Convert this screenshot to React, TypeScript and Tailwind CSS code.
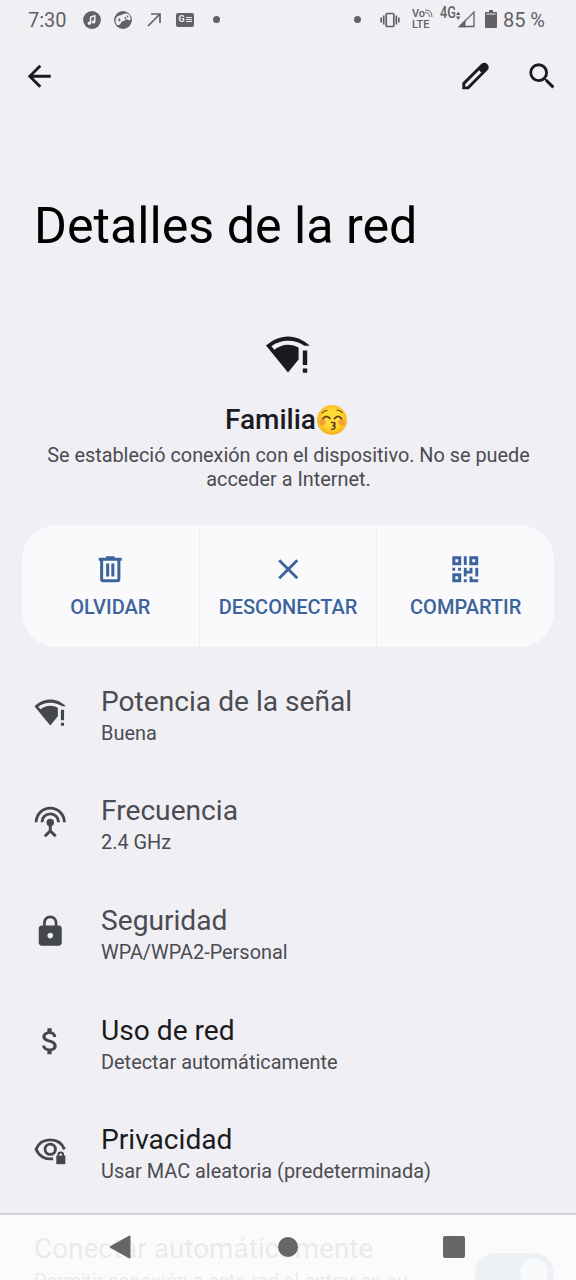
import type { ReactNode } from "react";
import { MdArrowBack, MdAttachMoney, MdClose, MdLock, MdSearch } from "react-icons/md";

function WifiAlertIcon({ className }: { className?: string }) {
  return (
    <svg viewBox="0 0 24 24" fill="currentColor" className={className}>
      <path d="M12 21.2 1 7.8C4 5 8 3.2 12 3.2S20 5 22.9 7.9H20.2C17.8 6.3 15 5.4 12 5.4S6 6.4 3.7 8.1L5.2 9.9C7 8.4 9.4 7.4 12 7.4c2 0 3.8.6 5.3 1.4v6Z" />
      <path d="M19.4 10.2h2.2v7.3h-2.2zM19.4 19.3h2.2v2.1h-2.2z" />
    </svg>
  );
}

function PencilIcon({ className }: { className?: string }) {
  return (
    <svg viewBox="0 0 24 24" fill="currentColor" className={className}>
      <path
        fillRule="evenodd"
        d="M3 21v-4.500L16.500 3.200q2.200-1.400 3.900.4t.4 3.900L7.500 21ZM5 19.100h1.500l9.700-9.700-1.500-1.500L5 17.600Z"
      />
    </svg>
  );
}

function AntennaIcon({ className }: { className?: string }) {
  return (
    <svg viewBox="0 0 24 24" fill="none" stroke="currentColor" strokeWidth="2" className={className}>
      <path d="M2.2 12a9.8 9.8 0 0 1 19.6 0M6.2 12a5.8 5.8 0 0 1 11.6 0" />
      <path d="M12 13v5M8.2 21.8 12 18l3.8 3.8" />
      <circle cx="12" cy="12.2" r="2.6" fill="currentColor" stroke="none" />
    </svg>
  );
}

function PrivacyIcon({ className }: { className?: string }) {
  return (
    <svg viewBox="0 0 24 24" fill="none" stroke="currentColor" strokeWidth="2" className={className}>
      <path d="M14 17.9c-5.4.8-10-2-11.9-6.6C3.8 7.300 7.500 4.800 12 4.800s8.300 2.500 9.900 6.600" />
      <circle cx="12" cy="11.300" r="3.600" />
      <path d="M16.200 15.700h6.300v6h-6.300z" fill="currentColor" stroke="none" />
      <path d="M17.600 16.500v-1.200a1.700 1.700 0 0 1 3.400 0v1.200" strokeWidth="1.300" />
    </svg>
  );
}

function TrashIcon({ className }: { className?: string }) {
  return (
    <svg viewBox="0 0 24 24" fill="none" stroke="currentColor" strokeWidth="2.100" className={className}>
      <path d="M6 5v14q0 1 1 1h10q1 0 1-1V5M4 5h16M9 4h6M10.200 8v9M13.800 8v9" />
    </svg>
  );
}

function QrIcon({ className }: { className?: string }) {
  return (
    <svg viewBox="0 0 24 24" fill="currentColor" className={className}>
      <path
        fillRule="evenodd"
        d="M3 3h6.200v6.200H3zM5.100 5.100v2h2v-2zM14.800 3H21v6.200h-6.200zM16.900 5.100v2h2v-2zM3 14.800h6.200V21H3zM5.100 16.900v2h2v-2z"
      />
      <path d="M11 3h2v6h-2zM3 11h2v2H3zM7 11h2v2H7zM11 11h2v2h2v-2h2v4h-4v2h-2zM19 11h2v6h-2zM11 19h2v2h-2zM15 17h2v2h4v2h-6z" />
    </svg>
  );
}

function KissEmoji() {
  return (
    <svg viewBox="0 0 32 32" className="h-[32px] w-[32px]">
      <defs>
        <radialGradient id="face" cx="50%" cy="45%" r="52%">
          <stop offset="0.500" stopColor="#ffdc35" />
          <stop offset="1" stopColor="#f8b51b" />
        </radialGradient>
      </defs>
      <circle cx="16" cy="16" r="15" fill="url(#face)" />
      <circle cx="6.500" cy="18" r="3.200" fill="#f58a45" opacity="0.700" />
      <circle cx="25.500" cy="18" r="3.200" fill="#f58a45" opacity="0.700" />
      <g fill="none" stroke="#5b3b22" strokeLinecap="round">
        <path d="M7 14.500q3.500-4.400 7 0M18.500 14.500q3.500-4.400 7 0" strokeWidth="1.800" />
        <path d="M6 9q2-2.500 5-2.500M21 6q3 0 5 2.500" strokeWidth="1.200" />
        <path d="M15.500 18.500q4-.3 3.500 1.700-.3 1.200-2.500 1.500 3 .3 2.500 2-.5 1.500-3.300 1.500" strokeWidth="1.600" />
      </g>
    </svg>
  );
}

function StatusBar() {
  return (
    <header className="flex h-[39px] items-center pl-7 pr-[31px] text-[20px] leading-none text-[#626166]">
      <span className="w-[39px]">7:30</span>
      <svg viewBox="0 0 18 18" className="ml-4 h-[18px] w-[18px]">
        <circle cx="9" cy="9" r="8.900" fill="currentColor" />
        <path d="M7.600 12V6l4.200-1.200v6" fill="none" stroke="#f0eff4" strokeWidth="1.500" />
        <circle cx="6.400" cy="12.200" r="1.700" fill="#f0eff4" />
        <circle cx="10.600" cy="10.900" r="1.700" fill="#f0eff4" />
      </svg>
      <svg viewBox="0 0 18 18" className="ml-[13px] h-[18px] w-[18px]">
        <circle cx="9" cy="9" r="8.900" fill="currentColor" />
        <path
          d="M1.500 8.500Q2.500 5 5.500 4.500q2-.3 4-1.500 3.500-1.300 5.500.5 2 2.500 1.500 5.500-1.500.8-3-.5-1.500-.8-3 1-1.500.8-3 1.300-1.500 4-4 3.500Q1 12 1.500 8.500Z"
          fill="#f0eff4"
        />
        <path d="M3.800 8.800h3M5.300 7.300v3" stroke="currentColor" strokeWidth="1" />
        <circle cx="11.300" cy="7" r="0.900" fill="currentColor" />
        <circle cx="13.500" cy="5.500" r="0.900" fill="currentColor" />
      </svg>
      <svg viewBox="0 0 14 14" fill="none" stroke="currentColor" strokeWidth="1.700" className="ml-[15px] h-[14px] w-[14px]">
        <path d="M1 13 13 1M4 1h9v9" />
      </svg>
      <span className="ml-[15px] flex h-[14px] w-[18px] items-center justify-center gap-px rounded-[2px] bg-[#626166] text-[#f0eff4]">
        <span className="text-[9px] font-bold leading-none">G</span>
        <span className="flex flex-col gap-px">
          <span className="h-px w-[6px] bg-[#f0eff4]" />
          <span className="h-px w-[6px] bg-[#f0eff4]" />
          <span className="h-px w-[6px] bg-[#f0eff4]" />
        </span>
      </span>
      <span className="ml-[19px] h-[7px] w-[7px] rounded-full bg-[#626166]" />

      <span className="ml-auto h-[7px] w-[7px] rounded-full bg-[#626166]" />
      <svg viewBox="0 0 20 16" fill="none" stroke="currentColor" strokeWidth="1.700" className="ml-[19px] h-4 w-5">
        <rect x="6.200" y="1.500" width="7.600" height="13" rx="1" />
        <path d="M3.700 3.500v9M16.300 3.500v9M1.200 5.500v5M18.800 5.500v5" />
      </svg>
      <span className="mb-[2px] ml-3 flex w-[22px] flex-col text-[11px] font-medium leading-[11px]">
        <span className="flex items-center">
          Vo
          <svg viewBox="0 0 8 8" fill="none" stroke="currentColor" strokeWidth="0.900" className="h-2 w-2">
            <path d="M0 1q7 0 7 7M0 3.500Q4.500 3.500 4.500 8" />
          </svg>
        </span>
        <span>LTE</span>
      </span>
      <span className="mb-[13px] ml-[6px] w-[17px] text-[16px] font-medium leading-none">
        <span className="inline-block origin-left scale-x-[0.790]">4G</span>
      </span>
      <svg viewBox="0 0 20 18" className="-ml-px mb-[2px] h-[18px] w-5">
        <path d="M0 5 2.200 1.500l2.200 3.500zM0 6.500h4.400L2.200 10z" fill="currentColor" />
        <path d="M18 2v14.500H3.500Z" fill="none" stroke="currentColor" strokeWidth="1.300" />
        <path d="M2 17.200 9.500 9.500v7.700Z" fill="currentColor" />
      </svg>
      <svg viewBox="0 0 12 18" fill="currentColor" className="mb-[2px] ml-[9px] h-[18px] w-3">
        <path d="M4 0h4v2h3q1 0 1 1v14q0 1-1 1H1q-1 0-1-1V3q0-1 1-1h3Z" />
        <path d="M1.500 3.500h9v1h-9z" fill="#f0eff4" />
      </svg>
      <span className="ml-[6px] whitespace-nowrap">85 %</span>
    </header>
  );
}

function ActionButton({ icon, label }: { icon: ReactNode; label: string }) {
  return (
    <button
      type="button"
      className="flex flex-1 flex-col items-center bg-[#fafafd] pt-[27px] text-[20px] font-medium leading-6 text-[#3b639c]"
    >
      {icon}
      <span className="mt-2">{label}</span>
    </button>
  );
}

type RowProps = {
  icon?: ReactNode;
  title: string;
  summary: string;
  active?: boolean;
};

function DetailRow({ icon, title, summary, active }: RowProps) {
  return (
    <li className="flex h-[109.600px] items-center pl-[33px]">
      <span className="flex w-[68px] pb-[7px] text-[#44474c]">{icon}</span>
      <div className="pt-px">
        <p className={active ? "text-[28.150px] leading-[34px] text-[#1b1b1f]" : "text-[28.150px] leading-[34px] text-[#4b4c51]"}>
          {title}
        </p>
        <p className="mt-px text-[19.920px] leading-7 text-[#4b4c51]">{summary}</p>
      </div>
    </li>
  );
}

const ROW_ICON = "h-[34.500px] w-[34.500px]";

export default function App() {
  return (
    <div className="relative h-[1280px] w-[576px] overflow-hidden bg-[#f0eff4] font-[Roboto,sans-serif] text-[#1b1b1f]">
      <StatusBar />
      <nav className="flex h-[75px] items-center pl-[22px] pr-[17px]">
        <MdArrowBack className="h-[34.500px] w-[34.500px]" />
        <PencilIcon className="ml-auto h-[34.500px] w-[34.500px]" />
        <MdSearch className="ml-8 h-[34.500px] w-[34.500px]" />
      </nav>
      <h1 className="mt-[82px] pl-[34px] text-[50.200px] leading-[60px] text-black">Detalles de la red</h1>

      <section className="flex flex-col items-center pt-[74px] text-center">
        <WifiAlertIcon className="h-12 w-12" />
        <div className="mt-[26px] flex h-8 items-center pr-[3px] text-[28px] font-medium">
          Familia
          <KissEmoji />
        </div>
        <p className="mt-2 w-[500px] pl-px text-[19.850px] leading-[23.500px] text-[#4b4c51]">
          Se estableció conexión con el dispositivo. No se puede acceder a Internet.
        </p>
      </section>

      <div className="mx-[22px] mt-[34px] flex h-[122px] gap-px overflow-hidden rounded-[35px]">
        <ActionButton icon={<TrashIcon className="h-[34.500px] w-[34.500px]" />} label="OLVIDAR" />
        <ActionButton icon={<MdClose className="h-[34.500px] w-[34.500px]" />} label="DESCONECTAR" />
        <ActionButton icon={<QrIcon className="h-[34.500px] w-[34.500px]" />} label="COMPARTIR" />
      </div>

      <ul className="mt-[14px]">
        <DetailRow icon={<WifiAlertIcon className={ROW_ICON} />} title="Potencia de la señal" summary="Buena" />
        <DetailRow icon={<AntennaIcon className={ROW_ICON} />} title="Frecuencia" summary="2.4 GHz" />
        <DetailRow icon={<MdLock className={ROW_ICON} />} title="Seguridad" summary="WPA/WPA2-Personal" />
        <DetailRow icon={<MdAttachMoney className={ROW_ICON} />} title="Uso de red" summary="Detectar automáticamente" active />
        <DetailRow
          icon={<PrivacyIcon className={ROW_ICON} />}
          title="Privacidad"
          summary="Usar MAC aleatoria (predeterminada)"
          active
        />
        <li className="flex h-[110px] justify-between pl-[34px] pr-[22px] pt-[23px] text-[#1b1b1f]">
          <div>
            <p className="text-[27.950px] leading-[34px]">Conectar automáticamente</p>
            <p className="mt-[2px] text-[19.700px] leading-7">Permitir conexión a esta red al entrar en su</p>
          </div>
          <span className="mt-[21px] flex h-10 w-[79px] shrink-0 justify-end rounded-full bg-[#4070b0] p-[6px]">
            <span className="h-7 w-7 rounded-full bg-[#d5e3ff]" />
          </span>
        </li>
      </ul>

      {/* Translucent system navigation over the scrolled list */}
      <footer className="absolute inset-x-0 bottom-0 h-[67px] border-t-2 border-[#d4d3d9] bg-[#fcfcfc]/92 text-[#666666]">
        <div className="flex h-[64px] items-center justify-between pl-[110px] pr-[111px]">
          <svg viewBox="0 0 21 24" fill="currentColor" className="h-6 w-[21px]">
            <path d="M.5 11 19 .7q1.500-.7 1.500 1v20.600q0 1.700-1.500 1L.5 13q-1-1 0-2Z" />
          </svg>
          <span className="ml-[2px] h-5 w-5 rounded-full bg-[#666666]" />
          <span className="h-[22px] w-[22px] rounded-[2px] bg-[#666666]" />
        </div>
      </footer>
    </div>
  );
}
